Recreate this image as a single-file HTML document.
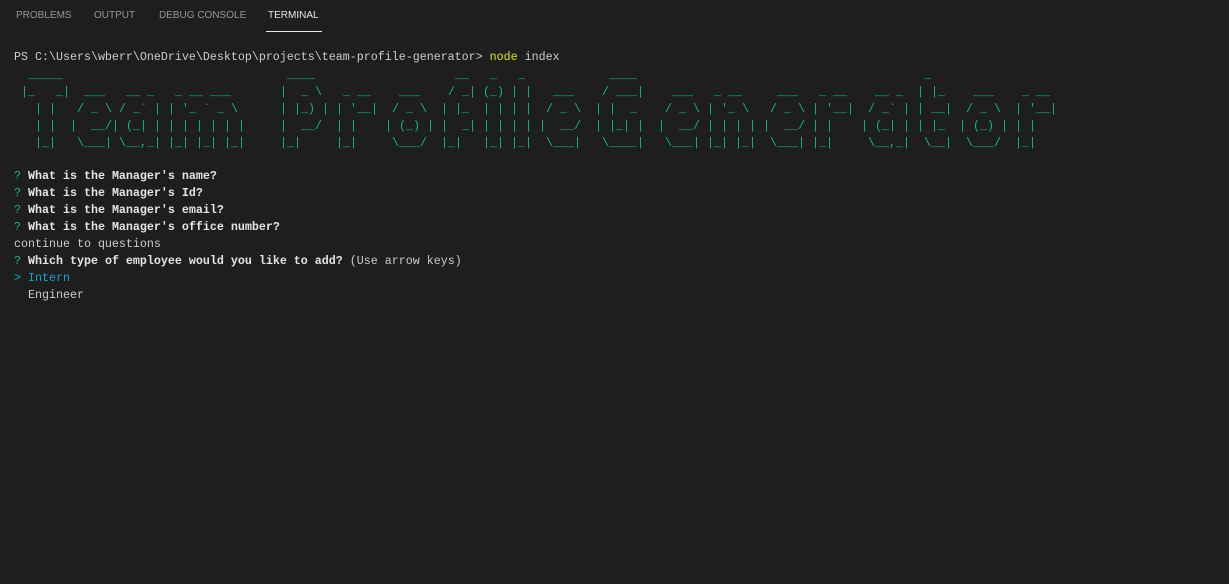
<!DOCTYPE html>
<html><head><meta charset="utf-8"><style>
html,body{margin:0;padding:0;background:#1e1e1e;width:1229px;height:584px;overflow:hidden}
.tab{position:absolute;top:10px;font:10px "Liberation Sans",sans-serif;color:#969696;white-space:nowrap;line-height:12px}
.act{color:#e7e7e7}
.ul{position:absolute;left:266px;top:31px;width:56px;height:1px;background:#e7e7e7}
pre{margin:0;font-family:"Liberation Mono",monospace;font-size:11.67px;line-height:17px;color:#cccccc}
#main{position:absolute;left:14px;top:49px}
.l{position:absolute;top:67px;color:#0dbc79}
.b{font-weight:bold;color:#e5e5e5}
.g{color:#0dbc79}.y{color:#e5e510}.c{color:#11a8cd}
</style></head><body>
<div class="tab" style="left:16px">PROBLEMS</div>
<div class="tab" style="left:94px">OUTPUT</div>
<div class="tab" style="left:159px">DEBUG CONSOLE</div>
<div class="tab act" style="left:268px">TERMINAL</div>
<div class="ul"></div>
<pre id="main">PS C:\Users\wberr\OneDrive\Desktop\projects\team-profile-generator&gt; <span class="y">node</span> index






<span class="g">?</span> <span class="b">What is the Manager's name?</span>
<span class="g">?</span> <span class="b">What is the Manager's Id?</span>
<span class="g">?</span> <span class="b">What is the Manager's email?</span>
<span class="g">?</span> <span class="b">What is the Manager's office number?</span>
continue to questions
<span class="g">?</span> <span class="b">Which type of employee would you like to add?</span> (Use arrow keys)
<span class="c">&gt; Intern</span>
  Engineer</pre>
<pre class="l" style="left:21px"> _____ 
|_   _|
  | |  
  | |  
  |_|  </pre>
<pre class="l" style="left:70px">      
  ___ 
 / _ \
|  __/
 \___|</pre>
<pre class="l" style="left:112px">       
  __ _ 
 / _` |
| (_| |
 \__,_|</pre>
<pre class="l" style="left:168px">           
 _ __ ___  
| '_ ` _ \ 
| | | | | |
|_| |_| |_|</pre>
<pre class="l" style="left:280px"> ____  
|  _ \ 
| |_) |
|  __/ 
|_|    </pre>
<pre class="l" style="left:336px">      
 _ __ 
| '__|
| |   
|_|   </pre>
<pre class="l" style="left:385px">       
  ___  
 / _ \ 
| (_) |
 \___/ </pre>
<pre class="l" style="left:441px">  __ 
 / _|
| |_ 
|  _|
|_|  </pre>
<pre class="l" style="left:483px"> _ 
(_)
| |
| |
|_|</pre>
<pre class="l" style="left:511px"> _ 
| |
| |
| |
|_|</pre>
<pre class="l" style="left:539px">      
  ___ 
 / _ \
|  __/
 \___|</pre>
<pre class="l" style="left:595px">  ____ 
 / ___|
| |  _ 
| |_| |
 \____|</pre>
<pre class="l" style="left:658px">      
  ___ 
 / _ \
|  __/
 \___|</pre>
<pre class="l" style="left:707px">       
 _ __  
| '_ \ 
| | | |
|_| |_|</pre>
<pre class="l" style="left:763px">      
  ___ 
 / _ \
|  __/
 \___|</pre>
<pre class="l" style="left:812px">      
 _ __ 
| '__|
| |   
|_|   </pre>
<pre class="l" style="left:861px">       
  __ _ 
 / _` |
| (_| |
 \__,_|</pre>
<pre class="l" style="left:917px"> _   
| |_ 
| __|
| |_ 
 \__|</pre>
<pre class="l" style="left:959px">       
  ___  
 / _ \ 
| (_) |
 \___/ </pre>
<pre class="l" style="left:1015px">      
 _ __ 
| '__|
| |   
|_|   </pre>
</body></html>
